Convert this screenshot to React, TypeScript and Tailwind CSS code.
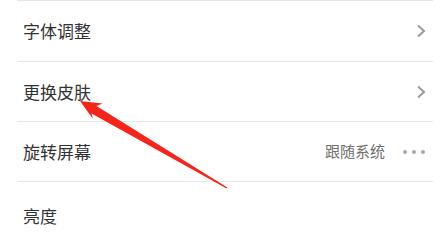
const rows = [
  { label: "字体调整", kind: "chevron" },
  { label: "更换皮肤", kind: "chevron" },
  { label: "旋转屏幕", kind: "value", value: "跟随系统" },
];

function Chevron() {
  return (
    <svg width="10" height="14" viewBox="0 0 10 14" className="shrink-0" aria-hidden>
      <polyline points="2,1.5 8,7 2,12.5" fill="none" stroke="#9a9a9a" strokeWidth="2" />
    </svg>
  );
}

function Dots() {
  return (
    <div className="flex items-center gap-[5px]">
      <span className="w-[4px] h-[4px] rounded-full bg-[#a8a8a8]" />
      <span className="w-[4px] h-[4px] rounded-full bg-[#a8a8a8]" />
      <span className="w-[4px] h-[4px] rounded-full bg-[#a8a8a8]" />
    </div>
  );
}

export default function App() {
  return (
    <div
      className="relative w-[442px] h-[243px] overflow-hidden bg-white"
      style={{ fontFamily: '"Noto Sans CJK SC", "Noto Sans", sans-serif' }}
    >
      <div className="ml-[17px] mr-[9px] border-t border-[#e6e6e6]">
        {rows.map((r, i) => (
          <div
            key={r.label}
            className={`flex items-center justify-between border-b border-[#e6e6e6] pl-[6px] pr-[7px] ${
              i === 0 ? "h-[61px]" : "h-[60px]"
            }`}
          >
            <span className="text-[17px] text-[#333333]">{r.label}</span>
            {r.kind === "chevron" ? (
              <Chevron />
            ) : (
              <div className="flex items-center gap-[18px] pr-[1px]">
                <span className="text-[15px] text-[#707070]">{r.value}</span>
                <Dots />
              </div>
            )}
          </div>
        ))}
        <div className="flex items-center h-[61px] pt-[7px] pl-[6px]">
          <span className="text-[17px] text-[#333333]">亮度</span>
        </div>
      </div>

      {/* red annotation arrow */}
      <svg className="absolute inset-0 pointer-events-none" width="442" height="243" viewBox="0 0 442 243" aria-hidden>
        <polygon
          points="80,101 102.5,103.5 96.5,106 227.4,187.5 226.6,188.5 91.5,113.5 93,119"
          fill="#f4261c"
        />
      </svg>
    </div>
  );
}
